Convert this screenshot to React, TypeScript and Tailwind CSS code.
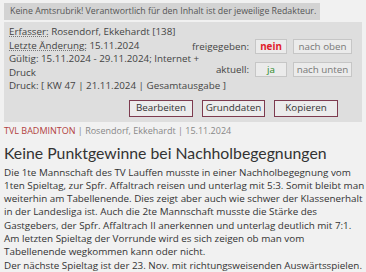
import React from "react";

const body = [
  "Die 1te Mannschaft des TV Lauffen musste in einer Nachholbegegnung vom",
  "1ten Spieltag, zur Spfr. Affaltrach reisen und unterlag mit 5:3. Somit bleibt man",
  "weiterhin am Tabellenende. Dies zeigt aber auch wie schwer der Klassenerhalt",
  "in der Landesliga ist. Auch die 2te Mannschaft musste die Stärke des",
  "Gastgebers, der Spfr. Affaltrach II anerkennen und unterlag deutlich mit 7:1.",
  "Am letzten Spieltag der Vorrunde wird es sich zeigen ob man vom",
  "Tabellenende wegkommen kann oder nicht.",
  "Der nächste Spieltag ist der 23. Nov. mit richtungsweisenden Auswärtsspielen.",
];

export default function App() {
  const f = { fontFamily: '"Open Sans", sans-serif' };
  return (
    <div className="w-[366px] h-[272px] overflow-hidden bg-[#f1f1f1] text-[#333]" style={f}>
      <div className="pt-[3px] px-[4px] flex">
        <div className="bg-[#d3d3d3] text-[#555] text-[8.8px] leading-[17px] pl-[6px] pr-[4px] whitespace-nowrap">
          Keine Amtsrubrik! Verantwortlich für den Inhalt ist der jeweilige Redakteur.
        </div>
      </div>
      <div className="mx-[4px] mt-[2px] bg-[#dedede] pl-[5px] pr-[10px] pt-[3px] pb-[5px] text-[9.8px] leading-[13.5px] text-[#444]">
        <div className="flex">
          <div className="w-[180px]">
            <div className="whitespace-nowrap"><span className="underline decoration-dotted decoration-[#777]">Erfasser:</span> Rosendorf, Ekkehardt [138]</div>
            <div className="whitespace-nowrap"><span className="underline decoration-dotted decoration-[#777]">Letzte Änderung:</span> 15.11.2024</div>
            <div className="whitespace-nowrap">Gültig: 15.11.2024 - 29.11.2024; Internet +</div>
            <div>Druck</div>
          </div>
          <div className="flex-1 flex justify-end pt-[12px]">
            <div className="grid grid-cols-[auto_32px_59px] gap-x-[6px] gap-y-[5px] items-center">
              <div className="text-right">freigegeben:</div>
              <div className="h-[15px] border border-[#c6c6c6] bg-[#ebebeb] text-[#e0202a] font-bold flex items-center justify-center">nein</div>
              <div className="h-[15px] border border-[#c6c6c6] bg-[#ebebeb] text-[#777] flex items-center justify-center">nach oben</div>
              <div className="text-right">aktuell:</div>
              <div className="h-[15px] border border-[#c6c6c6] bg-[#ebebeb] text-[#2a8a2a] flex items-center justify-center">ja</div>
              <div className="h-[15px] border border-[#c6c6c6] bg-[#ebebeb] text-[#777] flex items-center justify-center">nach unten</div>
            </div>
          </div>
        </div>
        <div className="whitespace-nowrap">Druck: [ KW 47 | 21.11.2024 | Gesamtausgabe ]</div>
        <div className="flex justify-end gap-[9px] mt-[7px] pr-[14px]">
          <div className="w-[64px] h-[17px] border border-[#7d3b4f] bg-[#ececec] text-[#333] flex items-center justify-center">Bearbeiten</div>
          <div className="w-[63px] h-[17px] border border-[#7d3b4f] bg-[#ececec] text-[#333] flex items-center justify-center">Grunddaten</div>
          <div className="w-[64px] h-[17px] border border-[#7d3b4f] bg-[#ececec] text-[#333] flex items-center justify-center">Kopieren</div>
        </div>
      </div>
      <div className="px-[4px] mt-[3px] text-[9px] leading-[12px] text-[#888] whitespace-nowrap">
        <span className="text-[#b2413f]">TVL BADMINTON</span> | Rosendorf, Ekkehardt | 15.11.2024
      </div>
      <div className="px-[4px] mt-[6px] text-[15.8px] leading-[20px] text-[#333] whitespace-nowrap" style={{ fontFamily: 'Lato, sans-serif' }}>
        Keine Punktgewinne bei Nachholbegegnungen
      </div>
      <div className="px-[4px] mt-[3px] text-[9.85px] leading-[13.3px] text-[#333]">
        {body.map((l, i) => (
          <div key={i} className="whitespace-nowrap">{l}</div>
        ))}
      </div>
    </div>
  );
}
